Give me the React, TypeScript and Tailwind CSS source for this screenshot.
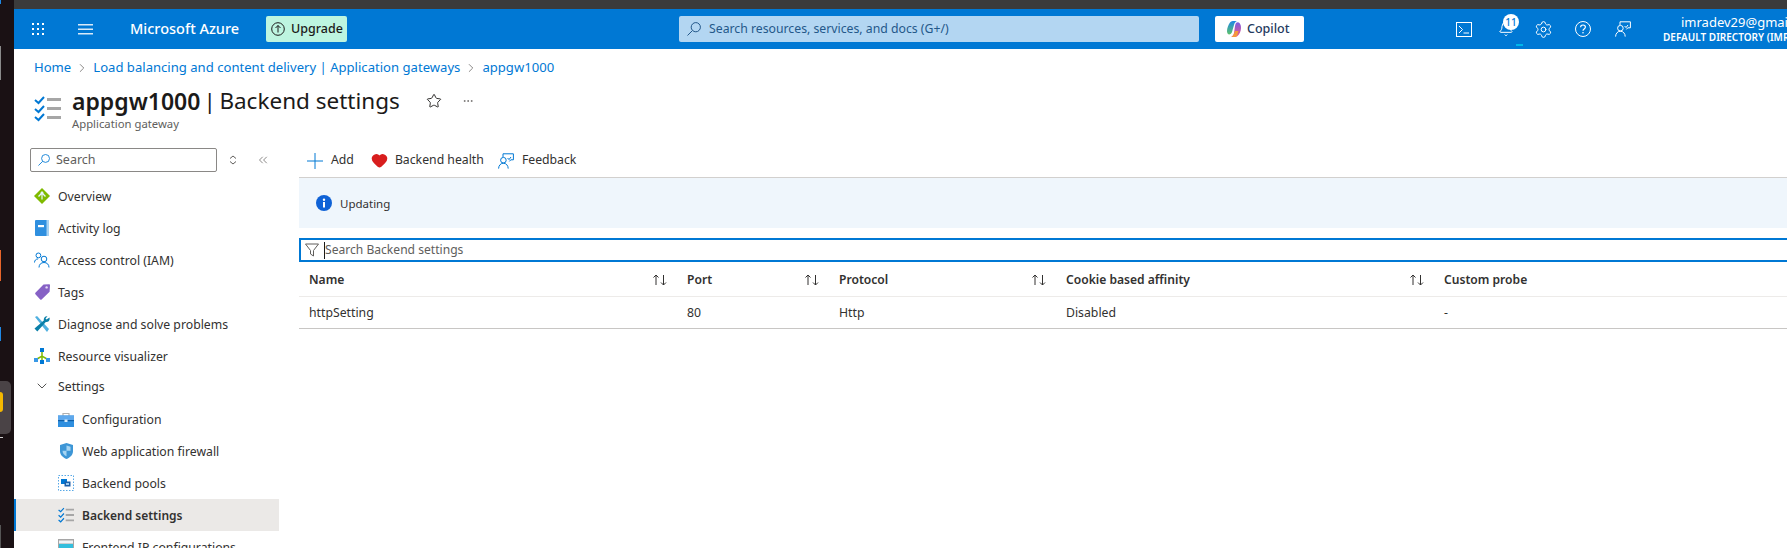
import React from "react";
import { Star, Ellipsis, Heart, ChevronRight, ChevronDown, ChevronsLeft, Settings, Bell } from "lucide-react";

const font = "[font-family:'Noto_Sans',sans-serif]";

function GridDots() {
  const dots = [0, 5, 10];
  return (
    <svg width="12" height="12" viewBox="0 0 12 12" fill="#fff">
      {dots.map((y) => dots.map((x) => <rect key={`${x}-${y}`} x={x} y={y} width="2" height="2" />))}
    </svg>
  );
}

function Magnifier({ size, color }: { size: number; color: string }) {
  return (
    <svg width={size} height={size} viewBox="0 0 14 14" fill="none" stroke={color} strokeWidth="1">
      <circle cx="8.800" cy="5.200" r="4.600" />
      <path d="M5.400 8.600L.5 13.500" />
    </svg>
  );
}

function FeedbackIcon({ color = "#fff" }: { color?: string }) {
  return (
    <svg width="16" height="16" viewBox="0 0 16 16" fill="none" stroke={color} strokeWidth="1">
      <path d="M5 4V.8h10.400v6h-2.600l-1.400 1.600" />
      <circle cx="5.400" cy="7.200" r="2.800" />
      <path d="M.6 15.600c0-3 2-5.400 4.800-5.400s4.800 2.400 4.800 5.400" />
      <path d="M9.600 5l1.400 1.600L13 4" />
    </svg>
  );
}

function ChecklistIcon({ size = 27 }: { size?: number }) {
  return (
    <svg width={size} height={size} viewBox="0 0 27 27" fill="none">
      <path d="M1 5l3.500 3L10 2M1 14l3.500 3L10 11M1 22l3.500 3L10 19" stroke="#0078d4" strokeWidth="2" />
      <path d="M13 4.500h14M13 13.500h14M13 22.500h14" stroke="#a6a6a6" strokeWidth="3" />
    </svg>
  );
}

function OverviewIcon() {
  return (
    <svg width="16" height="16" viewBox="0 0 16 16">
      <path d="M8 0l8 8-8 8-8-8z" fill="#7fba00" />
      <path d="M8 3l2 2.200H6zM5 9l-1-1 3-3h2l3 3-1 1-2.400-2.400v5H7.400v-5z" fill="#e8f4ff" />
    </svg>
  );
}

function ActivityIcon() {
  return (
    <svg width="14" height="16" viewBox="0 0 14 16">
      <rect width="14" height="16" rx="1" fill="#2f8fdf" />
      <rect x="11.500" width="2.500" height="16" fill="#a8d2f2" />
      <rect x="3" y="5" width="6" height="2.200" fill="#fff" />
    </svg>
  );
}

function IamIcon() {
  return (
    <svg width="16" height="16" viewBox="0 0 16 16" fill="none" stroke="#0078d4" strokeWidth="1">
      <circle cx="4.400" cy="3.400" r="2.400" />
      <path d="M.5 10.500c0-2 1.400-3.600 3.600-3.600" />
      <circle cx="10" cy="7" r="2.800" />
      <path d="M5 15.500c0-3 2-5 5-5s5 2 5 5" />
    </svg>
  );
}

function TagIcon() {
  return (
    <svg width="15" height="16" viewBox="0 0 15 16">
      <path d="M8.500.6L14 .2c.6 0 1 .4 1 1l-.4 6.500L6.600 15.500c-.4.4-1 .4-1.400 0L.4 10.200c-.4-.4-.4-1 0-1.400z" fill="#8661c5" />
      <circle cx="11.600" cy="3.400" r="1.200" fill="#e6dcf5" />
    </svg>
  );
}

function WrenchIcon() {
  return (
    <svg width="16" height="16" viewBox="0 0 16 16">
      <path d="M1 1l2-1 12 13-2 3z" fill="#50b0e0" />
      <path d="M15.500 1.500l-3 2-1-1 2-2.200C11 0 9.500 2 9.800 4.500L.5 12.500l2.800 3 8.500-9.500c2.500.4 4.500-1.500 3.700-4.500z" fill="#0a7fa8" />
    </svg>
  );
}

function VisualizerIcon() {
  return (
    <svg width="16" height="16" viewBox="0 0 16 16">
      <path d="M8 4v8M3 11l5-3 5 3" stroke="#7fba00" strokeWidth="1.500" fill="none" />
      <rect x="6" y="0" width="4" height="4" fill="#0078d4" />
      <rect x="0" y="10" width="4" height="4" fill="#3999e6" />
      <rect x="12" y="10" width="4" height="4" fill="#3999e6" />
      <rect x="6" y="12" width="4" height="4" fill="#0078d4" />
    </svg>
  );
}

function ToolboxIcon() {
  return (
    <svg width="16" height="15" viewBox="0 0 16 15">
      <path d="M5 4V1.500h6V4" stroke="#b0b0b0" strokeWidth="1.200" fill="none" />
      <rect y="3.500" width="16" height="11.500" fill="#2f8fdf" />
      <rect y="3.500" width="16" height="4.500" fill="#5ea8ec" />
      <rect y="8" width="16" height="1.200" fill="#0f5fa8" />
      <rect x="6.500" y="7.500" width="3" height="2.500" fill="#d8ecfb" />
    </svg>
  );
}

function ShieldIcon() {
  return (
    <svg width="13" height="16" viewBox="0 0 13 16">
      <path d="M6.500 0l6.500 2v6c0 4-3 6.500-6.500 8C3 14.500 0 12 0 8V2z" fill="#3d96d6" />
      <path d="M6.500 2.500l4 1.300v4H6.500v5.500C4.500 12.500 2.500 10.500 2.500 7.800h4z" fill="#a5d4f2" />
    </svg>
  );
}

function PoolsIcon() {
  return (
    <svg width="16" height="16" viewBox="0 0 16 16">
      <rect x=".5" y=".5" width="15" height="15" fill="none" stroke="#58a8e6" strokeDasharray="1.500 1.500" />
      <rect x="3" y="4" width="6" height="5" fill="#0078d4" />
      <rect x="6.500" y="6.500" width="6" height="5" fill="#1e5fa8" />
      <rect x="8" y="8" width="3" height="2" fill="#9ccbf0" />
    </svg>
  );
}

function FrontendIcon() {
  return (
    <svg width="16" height="16" viewBox="0 0 16 16">
      <rect width="16" height="16" fill="#a6a6a6" />
      <rect x="1" y="1.500" width="14" height="3" fill="#eef3f7" />
      <rect x="1" y="5" width="14" height="10" fill="#32bedd" />
    </svg>
  );
}

function CopilotIcon() {
  return (
    <svg width="14" height="16" viewBox="0 0 14 16">
      <defs>
        <linearGradient id="cpA" x1="0" y1="0" x2="0" y2="1">
          <stop offset="0" stopColor="#1e88e5" />
          <stop offset="1" stopColor="#5ec26a" />
        </linearGradient>
        <linearGradient id="cpB" x1="0" y1="0" x2="0" y2="1">
          <stop offset="0" stopColor="#7b5de0" />
          <stop offset="1" stopColor="#f0568c" />
        </linearGradient>
      </defs>
      <path d="M3 1.500C4 .4 5.500 0 7 0h3c-1.500.5-2.500 2-3 4L5 11c-.4 1.500-1.500 2.500-3 2.500-1.500-.5-2-2-2-3.500 0-3 1.500-6.500 3-8.500z" fill="url(#cpA)" />
      <path d="M9 2c1-1 2.500-1 3.500 0C13.700 3.500 14 5 14 7c0 3-1.500 6.500-3.500 8-1 .8-2 1-3.500 1H4c1.500-.5 2.500-2 3-4l1-7c.2-1 .4-2.200 1-3z" fill="url(#cpB)" />
      <path d="M8 10h3.500l-1.500 5c-1 .8-2 1-3 1H4.500C6 15 7.200 13 8 10z" fill="#f59b3a" />
    </svg>
  );
}

function SortArrows() {
  return (
    <svg width="16" height="12" viewBox="0 0 16 12" fill="none" stroke="#323130" strokeWidth="1">
      <path d="M4 11V1M1.500 3.500L4 1l2.500 2.500M11.500 1v10M9 8.500l2.500 2.500L14 8.500" />
    </svg>
  );
}

function SidebarRow({ icon, label, sub, active }: { icon: React.ReactNode; label: string; sub?: boolean; active?: boolean }) {
  return (
    <div
      className={`flex items-center h-[32px] w-[265px] text-[#323130] ${sub ? "pl-[44px]" : "pl-[20px]"} ${
        active ? "bg-[#ebe9e7] border-l-2 border-[#0078d4] font-semibold text-[12px]" : "text-[12.25px]"
      }`}
    >
      <span className={`flex justify-center w-[16px] shrink-0 ${active ? "-ml-[2px]" : ""}`}>{icon}</span>
      <span className="ml-[8px] whitespace-nowrap pt-[2px]">{label}</span>
    </div>
  );
}

const columns = [
  { name: "Name", value: "httpSetting", w: "w-[378px]" },
  { name: "Port", value: "80", w: "w-[152px]" },
  { name: "Protocol", value: "Http", w: "w-[227px]" },
  { name: "Cookie based affinity", value: "Disabled", w: "w-[378px]" },
];

export default function App() {
  return (
    <div className={`relative flex h-[548px] w-full overflow-hidden bg-white ${font}`}>
      <div className="relative w-[14px] shrink-0 bg-[#1a1114]">
        <div className="absolute left-0 top-0 h-[4px] w-[1px] bg-[#1e88e5]" />
        <div className="absolute left-0 top-[46px] h-[34px] w-[1px] bg-[#8a8a8a]" />
        <div className="absolute left-0 top-[250px] h-[31px] w-[1px] bg-[#e8652a]" />
        <div className="absolute left-0 top-[327px] h-[14px] w-[1px] bg-[#1e88e5]" />
        <div className="absolute left-0 top-[381px] h-[53px] w-[11px] rounded-r-[5px] bg-[#4a4346]" />
        <div className="absolute left-0 top-[392px] h-[20px] w-[3px] rounded-r-full bg-[#f5b800]" />
        <div className="absolute left-0 top-[437px] h-[1px] w-[3px] bg-[#d0d0d0]" />
        <div className="absolute left-0 top-[525px] h-[23px] w-[1px] bg-[#555]" />
      </div>

      <div className="flex min-w-0 flex-1 flex-col">
        <div className="h-[9px] shrink-0 bg-[#3b3b3b]" />
        <header className="flex h-[40px] shrink-0 items-center bg-[#0078d4] text-white *:shrink-0">
          <span className="ml-[18px] flex"><GridDots /></span>
          <svg className="ml-[34px]" width="15" height="11" viewBox="0 0 15 11" fill="#fff" opacity=".85">
            <rect width="15" height="1.500" />
            <rect y="4.500" width="15" height="1.500" />
            <rect y="9" width="15" height="1.500" />
          </svg>
          <span className="ml-[37px] w-[136px] whitespace-nowrap text-[14.500px] font-medium">Microsoft Azure</span>
          <div className="flex h-[26px] w-[81px] items-center rounded-[2px] bg-[#bdf5e0] pl-[5px] text-[12.500px] font-medium text-[#1b1a19]">
            <svg width="14" height="14" viewBox="0 0 14 14" fill="none" stroke="#1b1a19" strokeWidth="1">
              <circle cx="7" cy="7" r="6.300" />
              <path d="M7 10.500v-7M4.500 6L7 3.500 9.500 6" />
            </svg>
            <span className="ml-[6px]">Upgrade</span>
          </div>
          <div className="ml-[332px] flex h-[26px] w-[520px] items-center rounded-[2px] bg-[#b3d6f2] pl-[8px] text-[12.250px] text-[#24588a]">
            <Magnifier size={14} color="#24588a" />
            <span className="ml-[8px] whitespace-nowrap">Search resources, services, and docs (G+/)</span>
          </div>
          <div className="ml-[16px] flex h-[26px] w-[89px] items-center rounded-[2px] bg-white pl-[12px] text-[12.500px] font-medium text-[#243a5e]">
            <CopilotIcon />
            <span className="ml-[6px]">Copilot</span>
          </div>
          <svg className="ml-[152px]" width="16" height="15" viewBox="0 0 16 15" fill="none" stroke="#fff" strokeWidth="1">
            <rect x=".5" y=".5" width="15" height="14" />
            <path d="M3 4l3.500 3.500L3 11M7.500 11H13" />
          </svg>
          <span className="relative ml-[26px] flex">
            <Bell size={16} strokeWidth={1.5} />
            <span className="absolute -right-[5px] -top-[7px] flex h-[16px] w-[16px] items-center justify-center rounded-full bg-white text-[10px] font-medium text-[#0078d4]">11</span>
            <span className="absolute left-[18px] top-[23px] h-[2px] w-[7px] bg-[#00b7ea]" />
          </span>
          <Settings size={19} strokeWidth={1.25} className="ml-[20px]" />
          <svg className="ml-[22px]" width="16" height="16" viewBox="0 0 16 16" fill="none" stroke="#fff" strokeWidth="1">
            <circle cx="8" cy="8" r="7.500" />
            <path d="M5.600 6.200C5.600 4.800 6.700 4 8 4s2.400.8 2.400 2.100c0 2-2.400 1.900-2.400 3.700" strokeWidth="1.200" />
            <circle cx="8" cy="11.700" r=".8" fill="#fff" stroke="none" />
          </svg>
          <span className="ml-[24px] flex"><FeedbackIcon /></span>
          <div className="ml-[32px] w-[400px] whitespace-nowrap">
            <div className="pl-[18px] text-[13px] leading-[16px]">imradev29@gmail.com</div>
            <div className="text-[10px] font-semibold leading-[14px]">DEFAULT DIRECTORY (IMRADEV29GMAIL.ONMICROSOFT.COM)</div>
          </div>
        </header>

        <div className="flex h-[36px] shrink-0 items-center pl-[20px] pt-[1px] text-[13.100px] text-[#0078d4]">
          <span>Home</span>
          <ChevronRight size={14} strokeWidth={1.25} className="mx-[4px] text-[#605e5c]" />
          <span className="whitespace-nowrap">Load balancing and content delivery | Application gateways</span>
          <ChevronRight size={14} strokeWidth={1.25} className="mx-[4px] text-[#605e5c]" />
          <span>appgw1000</span>
        </div>

        <div className="flex h-[48px] shrink-0 pl-[20px]">
          <span className="mt-[10px]"><ChecklistIcon /></span>
          <div className="ml-[11px] whitespace-nowrap">
            <div className="flex h-[32px] items-center text-[22.500px] text-[#1b1a19]">
              <span className="text-[23px] font-semibold">appgw1000</span>
              <span className="ml-[3px] w-[12px] text-center">|</span>
              <span className="ml-[4px]">Backend settings</span>
              <Star size={16} strokeWidth={1.5} className="ml-[26px] text-[#323130]" />
              <Ellipsis size={12} strokeWidth={1.5} className="ml-[20px] text-[#605e5c]" />
            </div>
            <div className="text-[11.300px] leading-[14px] text-[#605e5c]">Application gateway</div>
          </div>
        </div>

        <div className="flex min-h-0 flex-1">
          <aside className="w-[285px] shrink-0">
            <div className="mt-[15px] flex items-center">
              <div className="ml-[16px] flex h-[24px] w-[187px] items-center rounded-[2px] border border-[#8a8886] pl-[7px] text-[12.500px] text-[#605e5c]">
                <Magnifier size={12} color="#0078d4" />
                <span className="ml-[6px] pt-[1px]">Search</span>
              </div>
              <svg className="ml-[12px]" width="8" height="10" viewBox="0 0 8 10" fill="none" stroke="#605e5c" strokeWidth="1">
                <path d="M1 3.500L4 1l3 2.500M1 6.500L4 9l3-2.500" />
              </svg>
              <ChevronsLeft size={14} strokeWidth={1.25} className="ml-[19px] text-[#605e5c]" />
            </div>
            <div className="mt-[8px]">
              <SidebarRow icon={<OverviewIcon />} label="Overview" />
              <SidebarRow icon={<ActivityIcon />} label="Activity log" />
              <SidebarRow icon={<IamIcon />} label="Access control (IAM)" />
              <SidebarRow icon={<TagIcon />} label="Tags" />
              <SidebarRow icon={<WrenchIcon />} label="Diagnose and solve problems" />
              <SidebarRow icon={<VisualizerIcon />} label="Resource visualizer" />
              <div className="-my-[1px] flex h-[30px] items-center pl-[20px] text-[12.250px] text-[#323130]">
                <span className="flex w-[16px] justify-center"><ChevronDown size={18} strokeWidth={1.25} /></span>
                <span className="ml-[8px] pt-[2px]">Settings</span>
              </div>
              <div className="h-[3px]" />
              <SidebarRow sub icon={<ToolboxIcon />} label="Configuration" />
              <SidebarRow sub icon={<ShieldIcon />} label="Web application firewall" />
              <SidebarRow sub icon={<PoolsIcon />} label="Backend pools" />
              <SidebarRow sub active icon={<ChecklistIcon size={16} />} label="Backend settings" />
              <SidebarRow sub icon={<FrontendIcon />} label="Frontend IP configurations" />
            </div>
          </aside>

          <main className="min-w-0 flex-1">
            <div className="flex h-[45px] items-center border-b border-[#d2d0ce] pt-[11px] pl-[8px] text-[12.250px] text-[#323130]">
              <svg width="16" height="16" viewBox="0 0 16 16" stroke="#0078d4" strokeWidth="1">
                <path d="M8 0v16M0 8h16" />
              </svg>
              <span className="ml-[8px]">Add</span>
              <Heart size={17} className="ml-[17px] fill-[#d81e1e] text-[#d81e1e]" />
              <span className="ml-[7px]">Backend health</span>
              <span className="ml-[14px] flex"><FeedbackIcon color="#0078d4" /></span>
              <span className="ml-[8px]">Feedback</span>
            </div>
            <div className="flex h-[50px] items-center bg-[#eff6fc] pl-[17px] text-[11.500px] text-[#323130]">
              <svg width="16" height="16" viewBox="0 0 16 16">
                <circle cx="8" cy="8" r="8" fill="#0f62d6" />
                <rect x="7" y="7" width="2" height="5.500" fill="#fff" />
                <circle cx="8" cy="4.700" r="1.200" fill="#fff" />
              </svg>
              <span className="ml-[8px] pt-[2px]">Updating</span>
            </div>
            <div className="mt-[10px] flex h-[24px] items-center border-2 border-r-0 border-[#0078d4] pl-[4px] text-[12.100px] text-[#605e5c]">
              <svg width="14" height="14" viewBox="0 0 14 14" fill="none" stroke="#605e5c" strokeWidth="1">
                <path d="M.5 1h13L8.500 7.500V13L5.500 11V7.500z" />
              </svg>
              <span className="ml-[5px] h-[17px] w-[1px] bg-[#1b1a19]" />
              <span className="whitespace-nowrap pt-[1px]">Search Backend settings</span>
            </div>
            <div className="flex h-[35px] items-center border-b border-[#edebe9] pl-[10px] pt-[3px] text-[12.100px] font-semibold text-[#323130]">
              {columns.map((c) => (
                <div key={c.name} className={`flex shrink-0 items-center justify-between pr-[19px] ${c.w}`}>
                  <span className="whitespace-nowrap">{c.name}</span>
                  <SortArrows />
                </div>
              ))}
              <span>Custom probe</span>
            </div>
            <div className="flex h-[32px] items-center border-b border-[#c8c6c4] pl-[10px] pt-[2px] text-[12.250px] text-[#323130]">
              {columns.map((c) => (
                <div key={c.name} className={`shrink-0 ${c.w}`}>{c.value}</div>
              ))}
              <span>-</span>
            </div>
          </main>
        </div>
      </div>
    </div>
  );
}
